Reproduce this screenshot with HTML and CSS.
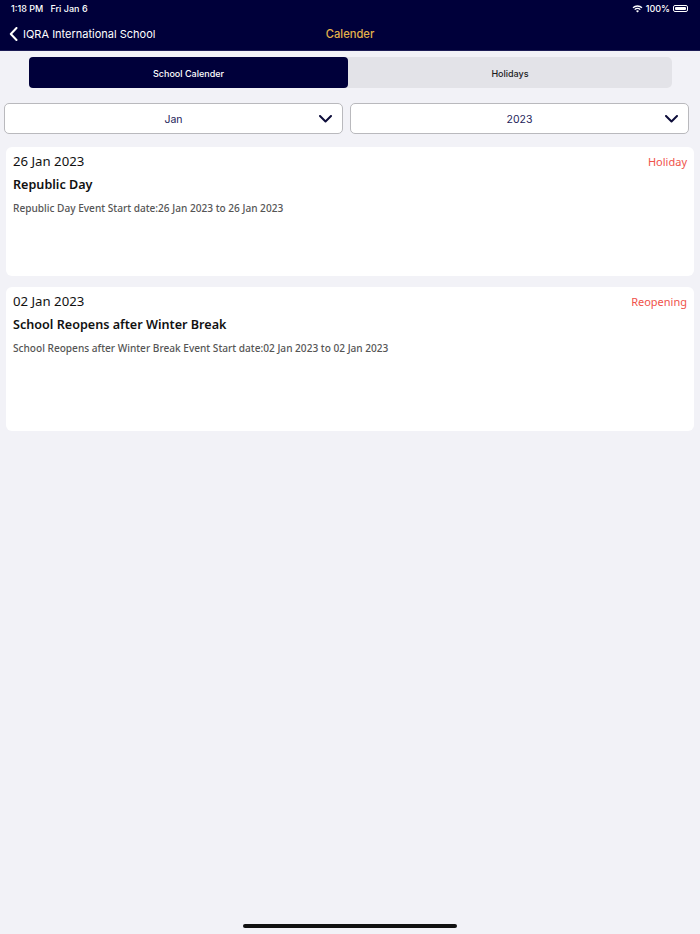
FILE: index.html
```html
<!DOCTYPE html>
<html lang="en">
<head>
<meta charset="UTF-8">
<meta name="viewport" content="width=device-width, initial-scale=1.0">
<title>Calender</title>
<link rel="stylesheet" href="styles.css">
</head>
<body>
<div class="app">
    <div class="topbar">
        <div class="status">
            <span class="status-time">1:18 PM&nbsp;&nbsp; Fri Jan 6</span>
            <span class="status-right">
                <svg class="wifi" width="11" height="8" viewBox="0 0 11 8"><path d="M5.5 7.6 L7 6 A2.2 2.2 0 0 0 4 6 Z" fill="#fff"/><path d="M2.7 4.6 A4 4 0 0 1 8.3 4.6" stroke="#fff" stroke-width="1.3" fill="none"/><path d="M1 2.8 A6.5 6.5 0 0 1 10 2.8" stroke="#fff" stroke-width="1.3" fill="none"/></svg>
                <span>100%</span>
                <span class="battery"><span class="battery-fill"></span></span>
            </span>
        </div>
        <div class="navbar">
            <a class="back">
                <svg width="9" height="14" viewBox="0 0 9 14"><path d="M7.5 1 L1.8 7 L7.5 13" stroke="#fff" stroke-width="2" fill="none" stroke-linecap="round" stroke-linejoin="round"/></svg>
                <span>IQRA International School</span>
            </a>
            <div class="nav-title">Calender</div>
        </div>
    </div>

    <div class="segment">
        <div class="seg-item active">School Calender</div>
        <div class="seg-item">Holidays</div>
    </div>

    <div class="filters">
        <div class="select">
            <span>Jan</span>
            <svg class="chev" width="13" height="8" viewBox="0 0 13 8"><path d="M1 1 L6.5 6.5 L12 1" stroke="#0d0d3a" stroke-width="2" fill="none" stroke-linecap="round" stroke-linejoin="round"/></svg>
        </div>
        <div class="select">
            <span>2023</span>
            <svg class="chev" width="13" height="8" viewBox="0 0 13 8"><path d="M1 1 L6.5 6.5 L12 1" stroke="#0d0d3a" stroke-width="2" fill="none" stroke-linecap="round" stroke-linejoin="round"/></svg>
        </div>
    </div>

    <div class="events">
        <div class="event-card short">
            <div class="event-head">
                <span class="event-date">26 Jan 2023</span>
                <span class="event-type">Holiday</span>
            </div>
            <div class="event-title">Republic Day</div>
            <div class="event-desc">Republic Day Event Start date:26 Jan 2023 to 26 Jan 2023</div>
        </div>
        <div class="event-card">
            <div class="event-head">
                <span class="event-date">02 Jan 2023</span>
                <span class="event-type">Reopening</span>
            </div>
            <div class="event-title">School Reopens after Winter Break</div>
            <div class="event-desc">School Reopens after Winter Break Event Start date:02 Jan 2023 to 02 Jan 2023</div>
        </div>
    </div>

    <div class="home-indicator"></div>
</div>
</body>
</html>
```

FILE: styles.css
```css
* {
    margin: 0;
    padding: 0;
    box-sizing: border-box;
}
body {
    background: #f2f2f7;
    font-family: Inter, "Liberation Sans", sans-serif;
}
.app {
    width: 700px;
    height: 934px;
    display: flex;
    flex-direction: column;
    position: relative;
}
.topbar {
    background: #00003a;
    height: 51px;
    border-bottom: 1px solid #1c1c55;
}
.status {
    height: 17px;
    display: flex;
    justify-content: space-between;
    align-items: center;
    padding: 0 12px 0 11px;
    color: #fff;
    font-size: 9px;
    font-weight: 500;
}
.status-right {
    display: flex;
    align-items: center;
    gap: 3px;
}
.battery {
    width: 15px;
    height: 7px;
    border: 1px solid #fff;
    border-radius: 2px;
    padding: 1px;
    display: flex;
    position: relative;
}
.battery-fill {
    flex: 1;
    background: #fff;
    border-radius: 1px;
}
.navbar {
    height: 33px;
    display: flex;
    align-items: center;
    position: relative;
    padding-left: 9px;
}
.back {
    display: flex;
    align-items: center;
    gap: 5px;
    color: #fff;
    font-size: 11px;
}
.nav-title {
    position: absolute;
    left: 0;
    right: 0;
    text-align: center;
    color: #e3b24a;
    font-size: 11.2px;
    font-weight: 500;
    pointer-events: none;
}
.segment {
    margin: 6px 28px 0 29px;
    height: 31px;
    display: flex;
    background: #e3e3e8;
    border-radius: 5px;
}
.seg-item {
    flex: 1;
    display: flex;
    justify-content: center;
    align-items: center;
    padding-top: 1px;
    font-size: 9px;
    font-weight: 500;
    color: #1c1c1e;
    border-radius: 4px;
}
.seg-item.active {
    flex: 0 0 319px;
    background: #00003a;
    color: #fff;
}
.filters {
    display: grid;
    grid-template-columns: 339px 339px;
    gap: 7px;
    padding: 15px 0 0 4px;
}
.select {
    height: 31px;
    background: #fff;
    border: 1px solid #b9b9bd;
    border-radius: 5px;
    display: flex;
    justify-content: center;
    align-items: center;
    padding-top: 2px;
    position: relative;
    font-size: 10.5px;
    color: #23235a;
}
.chev {
    position: absolute;
    right: 10px;
    top: 11px;
}
.events {
    display: flex;
    flex-direction: column;
    gap: 11px;
    padding: 13px 6px 0 6px;
}
.event-card {
    background: #fff;
    border-radius: 6px;
    height: 144px;
    padding: 5px 7px 0 7px;
    font-family: "Noto Sans", "Open Sans", sans-serif;
}
.event-card.short {
    height: 129px;
}
.event-head {
    display: flex;
    justify-content: space-between;
    align-items: baseline;
}
.event-date {
    font-size: 13.2px;
    color: #111;
}
.event-type {
    font-size: 11px;
    color: #f0524a;
}
.event-title {
    margin-top: 6px;
    font-size: 12.6px;
    font-weight: 600;
    color: #111;
}
.event-desc {
    margin-top: 8px;
    font-size: 10.1px;
    font-weight: 500;
    color: #555;
}
.home-indicator {
    position: absolute;
    left: 243px;
    bottom: 6px;
    width: 214px;
    height: 4px;
    background: #111;
    border-radius: 2px;
}
```
